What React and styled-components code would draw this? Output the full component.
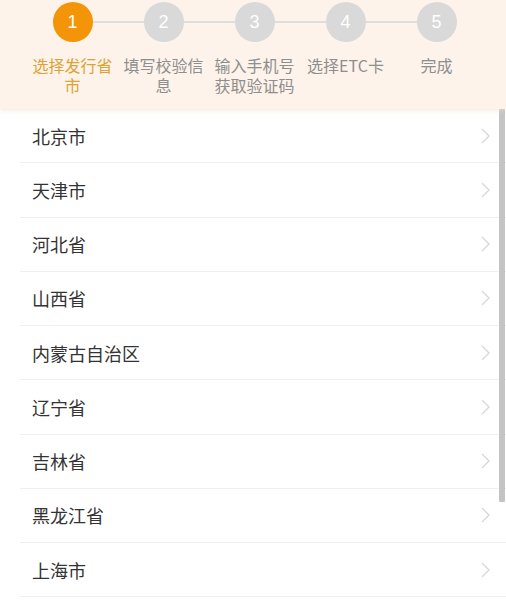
import React from 'react';
import styled, { createGlobalStyle } from 'styled-components';

const GlobalStyle = createGlobalStyle`
  html, body {
    margin: 0;
    padding: 0;
    background: #ffffff;
    font-family: 'Noto Sans CJK SC', 'Noto Sans', sans-serif;
  }
`;

const Page = styled.div`
  position: relative;
  width: 506px;
  height: 610px;
  overflow: hidden;
  background: #fff;
`;

const Header = styled.div`
  background: #fdf3ea;
  padding: 2px 0 11px 27px;
  height: 96px;
  box-shadow: 0 2px 4px rgba(240, 220, 200, 0.5);
  position: relative;
  z-index: 1;
`;

const Steps = styled.div`
  display: grid;
  grid-template-columns: repeat(5, 91px);
`;

const Step = styled.div`
  position: relative;
  display: flex;
  flex-direction: column;
  align-items: center;

  &::after {
    content: '';
    display: ${p => (p.$last ? 'none' : 'block')};
    position: absolute;
    top: 19px;
    left: 50%;
    width: 100%;
    height: 2px;
    background: #dedede;
  }
`;

const Circle = styled.div`
  position: relative;
  z-index: 1;
  width: 40px;
  height: 40px;
  border-radius: 50%;
  background: ${p => (p.$active ? '#f39409' : '#d9d9d9')};
  color: #fff;
  font-size: 18px;
  display: flex;
  align-items: center;
  justify-content: center;
  font-family: 'Liberation Sans', sans-serif;
`;

const Label = styled.div`
  margin-top: 13px;
  width: 84px;
  text-align: center;
  font-size: 16px;
  line-height: 20px;
  color: ${p => (p.$active ? '#dea234' : '#8e8e8e')};
`;

const List = styled.div`
  display: flex;
  flex-direction: column;
`;

const Row = styled.div`
  display: flex;
  align-items: center;
  justify-content: space-between;
  height: 53.25px;
  margin-left: 20px;
  padding: 0 16px 0 12px;
  border-bottom: 1px solid #efefef;
  font-size: 18px;
  color: #333;
`;

const Scrollbar = styled.div`
  position: absolute;
  right: 1px;
  top: 109px;
  width: 6px;
  height: 393px;
  background: #c4c4c4;
  border-radius: 1px;
`;

const Chevron = () => (
  <svg width="9" height="16" viewBox="0 0 9 16">
    <polyline points="1,1 8,8 1,15" fill="none" stroke="#d8d8d8" strokeWidth="1.4" />
  </svg>
);

const steps = [
  { n: 1, label: '选择发行省市' },
  { n: 2, label: '填写校验信息' },
  { n: 3, label: '输入手机号获取验证码' },
  { n: 4, label: '选择ETC卡' },
  { n: 5, label: '完成' },
];

const provinces = [
  '北京市', '天津市', '河北省', '山西省', '内蒙古自治区',
  '辽宁省', '吉林省', '黑龙江省', '上海市',
];

export default function App() {
  return (
    <Page>
      <GlobalStyle />
      <Header>
        <Steps>
          {steps.map((s, i) => (
            <Step key={s.n} $last={i === steps.length - 1}>
              <Circle $active={i === 0}>{s.n}</Circle>
              <Label $active={i === 0}>{s.label}</Label>
            </Step>
          ))}
        </Steps>
      </Header>
      <List>
        {provinces.map(p => (
          <Row key={p}>
            <span>{p}</span>
            <Chevron />
          </Row>
        ))}
      </List>
      <Scrollbar />
    </Page>
  );
}
